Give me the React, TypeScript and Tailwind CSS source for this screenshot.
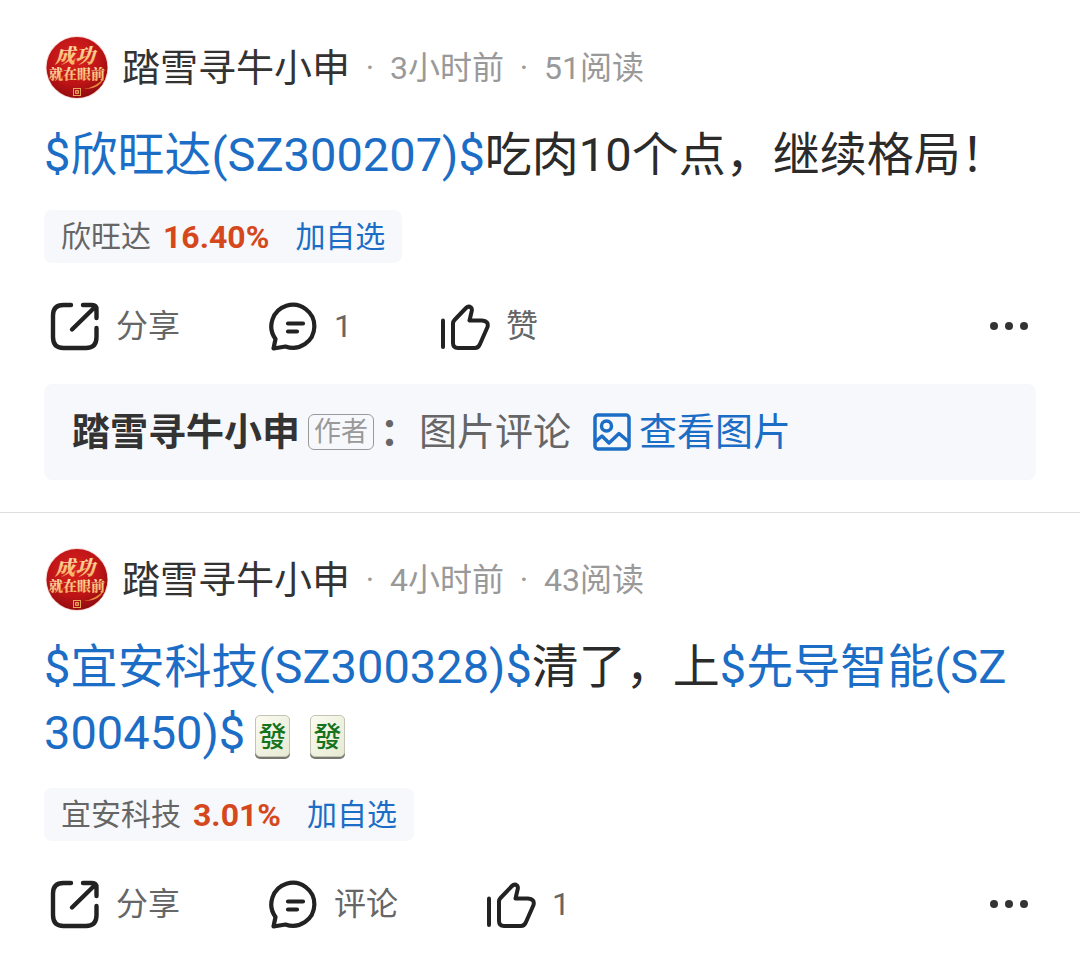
import React from 'react';

type Part =
  | { kind: 'text'; value: string }
  | { kind: 'stock'; name: string; code: string }
  | { kind: 'tile' };

interface Post {
  id: number;
  time: string;
  reads: string;
  parts: Part[];
  stock: { name: string; change: string };
  comments: string;
  likes: string;
  hasReply: boolean;
}

const AUTHOR = '踏雪寻牛小申';

const posts: Post[] = [
  {
    id: 1,
    time: '3小时前',
    reads: '51阅读',
    parts: [
      { kind: 'stock', name: '欣旺达', code: '300207' },
      { kind: 'text', value: '吃肉10个点，继续格局！' },
    ],
    stock: { name: '欣旺达', change: '16.40%' },
    comments: '1',
    likes: '赞',
    hasReply: true,
  },
  {
    id: 2,
    time: '4小时前',
    reads: '43阅读',
    parts: [
      { kind: 'stock', name: '宜安科技', code: '300328' },
      { kind: 'text', value: '清了，上' },
      { kind: 'stock', name: '先导智能', code: '300450' },
      { kind: 'tile' },
      { kind: 'tile' },
    ],
    stock: { name: '宜安科技', change: '3.01%' },
    comments: '评论',
    likes: '1',
    hasReply: false,
  },
];

const Avatar = ({ id }: { id: number }) => (
  <svg viewBox="0 0 64 64" className="h-16 w-16 shrink-0" aria-hidden="true">
    <defs>
      <radialGradient id={`red-${id}`} cx="45%" cy="35%" r="65%">
        <stop offset="0" stopColor="#d8221f" />
        <stop offset="0.65" stopColor="#bd1417" />
        <stop offset="1" stopColor="#930c0f" />
      </radialGradient>
      <linearGradient id={`gold-${id}`} x1="0" y1="0" x2="0" y2="1">
        <stop offset="0" stopColor="#ffe9b4" />
        <stop offset="1" stopColor="#f3a65a" />
      </linearGradient>
    </defs>
    <circle cx="33" cy="31.5" r="31.5" fill="#f8dcd8" />
    <circle cx="33" cy="31.5" r="30.5" fill={`url(#red-${id})`} />
    <g fill={`url(#gold-${id})`} fontWeight="900" textAnchor="middle" className="font-['Noto_Serif_CJK_SC','Noto_Sans_CJK_SC',serif]">
      <text x="31" y="27" fontSize="20" fontStyle="italic">成功</text>
      <text x="33" y="43" fontSize="14">就在眼前</text>
    </g>
    <path d="M40 53q12-2 20-11q-5 12-20 11z" fill="#e8843c" />
    <g fill="none" stroke="#eba35c" strokeWidth="1">
      <rect x="29.5" y="52.5" width="7" height="7" />
      <path d="M31.5 54.5h3v3h-3zM33 54v4" />
    </g>
  </svg>
);

const ShareIcon = () => (
  <svg viewBox="0 0 50 50" className="h-[50px] w-[50px]" fill="none" stroke="#222" strokeWidth="4.4" strokeLinecap="round" strokeLinejoin="round" aria-hidden="true">
    <path d="M21 4H13.500Q3 4 3 14.500V36Q3 47 13.500 47H36Q46.500 47 46.500 36V27" />
    <path d="M33 4H42Q46.500 4 46.500 8.500V17M44.500 6.500L22 28.500" />
  </svg>
);

const CommentIcon = () => (
  <svg viewBox="0 0 50 50" className="h-[50px] w-[50px]" fill="none" stroke="#222" strokeWidth="4.2" strokeLinecap="round" strokeLinejoin="round" aria-hidden="true">
    <path d="M5.500 47.500L7.500 38A21.500 21.500 0 1 1 17.500 45.500Z" />
    <path d="M20 22.500H35M20 30.500H29" />
  </svg>
);

const LikeIcon = () => (
  <svg viewBox="0 0 50 50" className="h-[50px] w-[50px]" fill="none" stroke="#222" strokeWidth="4" strokeLinecap="round" strokeLinejoin="round" aria-hidden="true">
    <path d="M3 19.500V46" />
    <path d="M13 22.500Q13 20.500 14.500 19L26 7Q28.500 4.500 31 6.500Q32.500 8 31.500 11L29.500 19.500H42Q49 20 47.500 26L40 43Q38.500 47 35 47H18Q13 47 13 42Z" />
  </svg>
);

const PictureIcon = () => (
  <svg viewBox="0 0 38 38" className="h-[38px] w-[38px]" fill="none" stroke="#1b6dc5" strokeWidth="3.5" strokeLinejoin="round" aria-hidden="true">
    <rect x="2" y="2" width="34" height="34" rx="3" />
    <circle cx="13.500" cy="13" r="5" />
    <path d="M2 29L9 23L16 30L26 20.500L36 29" />
  </svg>
);

const Tile = ({ id }: { id: string }) => (
  <svg viewBox="0 0 35 44" className="mx-2.5 inline-block h-11 w-[35px] align-middle" role="img" aria-label="發">
    <defs>
      <linearGradient id={id} x1="0" y1="0" x2="1" y2="1">
        <stop offset="0" stopColor="#fbfbf0" />
        <stop offset="1" stopColor="#e6ead3" />
      </linearGradient>
    </defs>
    <rect x="0" y="1" width="35" height="43" rx="5" fill="#77776e" />
    <rect x="0.500" y="0.500" width="34" height="41" rx="4.500" fill={`url(#${id})`} stroke="#c4c4b4" />
    <text x="17.500" y="31.500" fontSize="28" fontWeight="500" textAnchor="middle" fill="#14731c" className="font-['Noto_Sans_CJK_TC',sans-serif]">發</text>
  </svg>
);

const PostCard = ({ post }: { post: Post }) => (
  <article className="border-t border-[#dedede] px-11 pt-[35px] pb-8 first:border-transparent">
    <header className="flex items-center text-[32px] leading-10 text-[#999]">
      <Avatar id={post.id} />
      <h2 className="ml-3.5 text-[38px] text-[#333]">{AUTHOR}</h2>
      <span className="w-10 text-center">·</span>
      <time>{post.time}</time>
      <span className="w-10 text-center">·</span>
      <span>{post.reads}</span>
    </header>

    <p className="mt-[22px] pr-3 text-[47px] leading-[66px] break-all text-[#2b2b2b]">
      {post.parts.map((part, index) => {
        if (part.kind === 'stock') {
          return (
            <a key={index} href="#" className="text-[#1b6dc5]">
              <span>{`$${part.name}(SZ`}</span>
              <span>{`${part.code})$`}</span>
            </a>
          );
        }
        if (part.kind === 'tile') {
          return <Tile key={index} id={`tile-${post.id}-${index}`} />;
        }
        return <span key={index}>{part.value}</span>;
      })}
    </p>

    <div className="mt-[22px] inline-flex h-[53px] items-center rounded-lg bg-[#f7f8fb] px-[17px] text-[30px] text-[#666]">
      <span>{post.stock.name}</span>
      <strong className="ml-3 text-[32px] font-bold text-[#d5481d]">{post.stock.change}</strong>
      <button type="button" className="ml-[26px] text-[#1b6dc5]">加自选</button>
    </div>

    <div className="mt-[38px] flex items-center gap-[88px] pl-1.5 text-[32px] leading-[50px] text-[#666]">
      <button type="button" className="flex items-center gap-4">
        <ShareIcon />
        分享
      </button>
      <button type="button" className="flex items-center gap-4">
        <CommentIcon />
        {post.comments}
      </button>
      <button type="button" className="flex items-center gap-4">
        <LikeIcon />
        {post.likes}
      </button>
      <button type="button" aria-label="更多" className="mr-2 ml-auto flex gap-[7px]">
        <span className="h-2 w-2 rounded-full bg-[#333]" />
        <span className="h-2 w-2 rounded-full bg-[#333]" />
        <span className="h-2 w-2 rounded-full bg-[#333]" />
      </button>
    </div>

    {post.hasReply && (
      <div className="mt-[33px] flex h-24 items-center rounded-lg bg-[#f7f8fb] px-7 text-[38px] text-[#666]">
        <strong className="font-bold text-[#333]">{AUTHOR}</strong>
        <span className="ml-2 rounded-md border border-[#999] px-[5px] text-[27px] leading-[34px] text-[#999]">作者</span>
        <span className="w-[45px] pl-1.5 font-bold">：</span>
        <span>图片评论</span>
        <a href="#" className="ml-[22px] flex items-center gap-2 text-[#1b6dc5]">
          <PictureIcon />
          查看图片
        </a>
      </div>
    )}
  </article>
);

const App = () => (
  <main lang="zh-CN" className="min-h-screen bg-white font-[Roboto,'Noto_Sans_CJK_SC',sans-serif]">
    {posts.map((post) => (
      <PostCard key={post.id} post={post} />
    ))}
  </main>
);

export default App;
